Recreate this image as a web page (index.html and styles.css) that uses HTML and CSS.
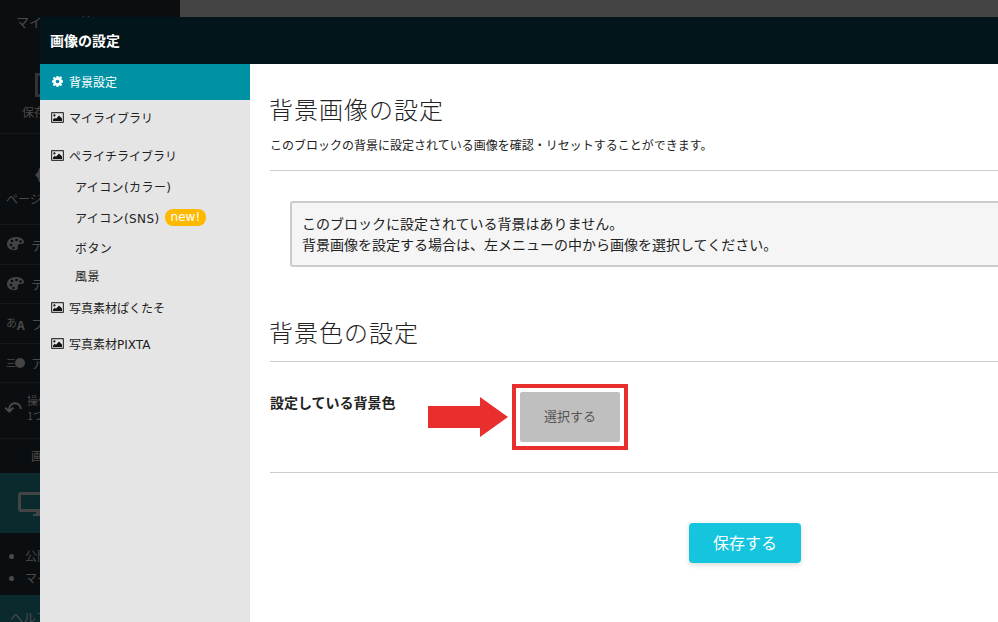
FILE: index.html
```html
<!DOCTYPE html>
<html lang="ja">
<head>
    <meta charset="UTF-8">
    <meta name="viewport" content="width=device-width, initial-scale=1.0">
    <title>画像の設定</title>
    <link rel="stylesheet" href="styles.css">
</head>
<body>

<svg class="svg-defs" width="0" height="0">
    <symbol id="icon-image" viewBox="0 0 13 11">
        <path fill="#3a3a3a" fill-rule="evenodd" d="M1 0h11a1 1 0 0 1 1 1v9a1 1 0 0 1-1 1H1a1 1 0 0 1-1-1V1a1 1 0 0 1 1-1zm.2 1.2v8.6h10.6V1.2z"/>
        <circle cx="3.400" cy="3.400" r="1.100" fill="#111"/>
        <path fill="#111" d="M2 9V7.400l1.800-1.600 1.200 1 3-3.200 3 3V9z"/>
    </symbol>
    <symbol id="icon-palette" viewBox="0 0 20 20">
        <path fill="#444" d="M10 3c4 0 8 2 8 5 0 3-5 1-6 3s1 4-2 5c-5 1-9-2-9-6s4-7 9-7z"/>
        <circle cx="6" cy="7" r="1.300" fill="#0a0e10"/>
        <circle cx="10.500" cy="6" r="1.300" fill="#0a0e10"/>
        <circle cx="14.500" cy="7.500" r="1.300" fill="#0a0e10"/>
        <circle cx="5" cy="11" r="1.300" fill="#0a0e10"/>
        <circle cx="7.500" cy="14" r="1.300" fill="#0a0e10"/>
    </symbol>
</svg>

<!-- Dimmed editor behind the modal -->
<aside class="editor-side">
    <div class="side-row side-title">マイページ管理</div>
    <div class="side-row side-save">
        <span class="save-icon"></span>
        <span>保存</span>
    </div>
    <div class="side-row side-page">
        <svg class="page-icon" viewBox="0 0 24 24"><path fill="#444" d="M12 3l3 2 4-1 1 4 3 3-3 3-1 4-4-1-3 2-3-2-4 1-1-4-3-3 3-3 1-4 4 1z"/></svg>
        <span>ページ</span>
    </div>
    <div class="side-row side-tool">
        <svg class="tool-icon"><use href="#icon-palette"/></svg>
        <span>テ</span>
    </div>
    <div class="side-row side-tool">
        <svg class="tool-icon"><use href="#icon-palette"/></svg>
        <span>テ</span>
    </div>
    <div class="side-row side-tool">
        <span class="font-icon">あ<b>A</b></span>
        <span>フ</span>
    </div>
    <div class="side-row side-tool">
        <span class="anim-icon">三<i></i></span>
        <span>ア</span>
    </div>
    <div class="side-row side-undo">
        <span class="undo-icon">↶</span>
        <span class="undo-text">操作<br>1つ</span>
    </div>
    <div class="side-row side-image">画</div>
    <div class="side-device">
        <svg class="device-icon" viewBox="0 0 44 24"><path fill="#444" d="M3 0h38a3 3 0 0 1 3 3v14a3 3 0 0 1-3 3H26v2h3v2H15v-2h3v-2H3a3 3 0 0 1-3-3V3a3 3 0 0 1 3-3zm0 3v14h38V3z"/></svg>
    </div>
    <ul class="side-list">
        <li>公開</li>
        <li>マイ</li>
    </ul>
    <div class="side-help">ヘルプ</div>
</aside>
<div class="editor-top"></div>

<!-- Modal -->
<div class="modal">
    <header class="modal-header">画像の設定</header>
    <div class="modal-body">
        <nav class="menu">
            <a class="menu-item active">
                <svg class="menu-icon" viewBox="0 0 12 12"><path fill="#fff" fill-rule="evenodd" d="M5 0h2l.3 1.600 1-.4 1.300-1 1.500 1.500-1 1.300.4 1L12 5v2l-1.500.3-.4 1 1 1.300-1.500 1.500-1.300-1-1 .4L7 12H5l-.3-1.500-1-.4-1.300 1L.9 9.600l1-1.300-.4-1L0 7V5l1.500-.3.4-1-1-1.300L2.400.9l1.300 1 1-.4zM6 4a2 2 0 1 0 0 4 2 2 0 0 0 0-4z"/></svg>
                背景設定
            </a>
            <a class="menu-item">
                <svg class="menu-icon"><use href="#icon-image"/></svg>
                マイライブラリ
            </a>
            <a class="menu-item menu-parent">
                <svg class="menu-icon"><use href="#icon-image"/></svg>
                ペライチライブラリ
            </a>
            <a class="menu-sub">アイコン(カラー)</a>
            <a class="menu-sub menu-sub-badge">アイコン(SNS)<span class="badge">new!</span></a>
            <a class="menu-sub">ボタン</a>
            <a class="menu-sub">風景</a>
            <a class="menu-item menu-after">
                <svg class="menu-icon"><use href="#icon-image"/></svg>
                写真素材ぱくたそ
            </a>
            <a class="menu-item">
                <svg class="menu-icon"><use href="#icon-image"/></svg>
                写真素材PIXTA
            </a>
        </nav>

        <main class="content">
            <h2 class="section-title">背景画像の設定</h2>
            <p class="section-lead">このブロックの背景に設定されている画像を確認・リセットすることができます。</p>
            <hr class="rule">
            <div class="notice">
                このブロックに設定されている背景はありません。<br>
                背景画像を設定する場合は、左メニューの中から画像を選択してください。
            </div>
            <h2 class="section-title second">背景色の設定</h2>
            <hr class="rule rule-tight">
            <div class="color-row">
                <div class="color-label">設定している背景色</div>
                <div class="select-frame">
                    <button class="select-btn">選択する</button>
                </div>
                <svg class="callout-arrow" viewBox="0 0 80 40"><path fill="#e92e2e" d="M0 9h52V0l28 20-28 20V31H0z"/></svg>
            </div>
            <hr class="rule">
            <div class="actions">
                <button class="save-btn">保存する</button>
            </div>
        </main>
    </div>
</div>

</body>
</html>
```

FILE: styles.css
```css
/* Basic Reset */
* {
    margin: 0;
    padding: 0;
    box-sizing: border-box;
}

html, body {
    height: 622px;
    overflow: hidden;
}

body {
    position: relative;
    display: flex;
    font-family: "Noto Sans CJK JP", "Noto Sans", sans-serif;
    background: #0a0e10;
    color: #222;
}

.svg-defs {
    position: absolute;
}

/* Dimmed editor */
.editor-side {
    flex: 0 0 180px;
    height: 622px;
    color: #4a4a4a;
    font-size: 12px;
    background: #0a0e10;
}

.editor-top {
    flex: 1;
    height: 17px;
    background: #444;
}

.side-row {
    border-bottom: 1px solid #15191b;
}

.side-title {
    height: 45px;
    padding: 14px 0 0 16px;
    font-size: 13px;
    line-height: 16px;
    border-bottom: 0;
}

.side-save {
    height: 89px;
    padding: 28px 0 0 22px;
    display: flex;
    flex-direction: column;
    gap: 6px;
}

.save-icon {
    width: 18px;
    height: 24px;
    margin-left: 13px;
    border: 3px solid #333;
}

.side-page {
    height: 91px;
    padding: 30px 0 0 6px;
    display: flex;
    flex-direction: column;
    gap: 2px;
}

.page-icon {
    width: 24px;
    height: 24px;
    margin-left: 28px;
}

.side-tool {
    height: 39.5px;
    padding-left: 6px;
    display: flex;
    align-items: center;
    gap: 5px;
    font-size: 13px;
}

.tool-icon {
    width: 20px;
    height: 20px;
}

.font-icon {
    width: 20px;
    font-size: 11px;
    line-height: 18px;
    white-space: nowrap;
}

.font-icon b {
    font-size: 12px;
    vertical-align: -3px;
}

.anim-icon {
    display: flex;
    align-items: center;
    width: 20px;
    font-size: 10px;
}

.anim-icon i {
    width: 10px;
    height: 10px;
    margin-left: -1px;
    border-radius: 50%;
    background: #444;
}

.side-undo {
    height: 56px;
    padding: 10px 0 0 4px;
    display: flex;
    gap: 5px;
}

.undo-icon {
    font-size: 22px;
    line-height: 28px;
}

.undo-text {
    line-height: 15px;
    font-size: 11px;
}

.side-image {
    height: 34px;
    padding: 8px 0 0 31px;
    border-bottom: 0;
}

.side-device {
    height: 60px;
    padding: 19px 0 0 18px;
    background: #0b2a2e;
}

.device-icon {
    width: 44px;
    height: 24px;
}

.side-list {
    height: 62px;
    padding: 12px 0 0 25px;
    line-height: 22px;
    font-size: 12px;
}

.side-help {
    height: 40px;
    padding: 12px 0 0 10px;
    font-size: 13px;
    background: #0b2a2e;
}

/* Modal */
.modal {
    position: absolute;
    top: 17px;
    left: 40px;
    width: 1200px;
    height: 605px;
    display: flex;
    flex-direction: column;
    background: #fff;
}

.modal-header {
    height: 47px;
    padding-left: 10px;
    font-size: 14px;
    font-weight: bold;
    line-height: 47px;
    color: #fff;
    background: #02151a;
}

.modal-body {
    flex: 1;
    display: flex;
}

/* Left menu */
.menu {
    flex: 0 0 210px;
    background: #e5e5e5;
    font-family: "DejaVu Sans", "Noto Sans CJK JP", sans-serif;
    font-size: 12px;
}

.menu-item {
    display: flex;
    align-items: center;
    gap: 5px;
    height: 36px;
    padding: 0 0 2px 11px;
    color: #222;
}

.menu-item.active {
    color: #fff;
    background: #0092a4;
}

.menu-icon {
    width: 13px;
    height: 11px;
}

.menu-parent {
    padding: 2px 0 0 11px;
}

.menu-sub {
    display: flex;
    align-items: center;
    height: 28px;
    padding-left: 35px;
    letter-spacing: 0.4px;
    color: #222;
}

.menu-sub-badge {
    height: 33px;
    padding-top: 2px;
}

.badge {
    margin-left: 5px;
    padding: 0 6px;
    font-size: 12px;
    line-height: 17px;
    letter-spacing: 0;
    color: #fff;
    background: #ffb900;
    border-radius: 8px;
}

.menu-after {
    margin-top: 1px;
}

/* Main content */
.content {
    flex: 1;
    padding: 0 20px;
}

.section-title {
    margin-top: 27px;
    font-size: 24px;
    font-weight: 300;
    line-height: 36px;
    letter-spacing: 1px;
    color: #222;
    text-indent: -1px;
}

.section-title.second {
    margin-top: 47px;
}

.section-lead {
    margin-top: 9px;
    margin-bottom: 16px;
    font-size: 12px;
    line-height: 18px;
}

.rule {
    border: 0;
    border-top: 1px solid #ccc;
}

.rule-tight {
    margin-top: 11px;
}

.notice {
    margin: 30px 0 0 20px;
    height: 66px;
    padding: 10px 10px;
    font-size: 14px;
    line-height: 21px;
    color: #222;
    background: #f5f5f5;
    border: 2px solid #ccc;
    border-radius: 3px;
}

.color-row {
    position: relative;
    display: flex;
    height: 110px;
    padding-top: 22px;
}

.color-label {
    flex: 0 0 242px;
    padding-top: 6px;
    font-size: 14px;
    font-weight: bold;
    line-height: 24px;
    color: #222;
}

.select-frame {
    width: 116px;
    height: 66px;
    padding: 4px;
    border: 4px solid #e92e2e;
}

.select-btn {
    display: block;
    width: 100px;
    height: 50px;
    padding-bottom: 4px;
    font-family: inherit;
    font-size: 13px;
    color: #555;
    background: #bfbfbf;
    border: 0;
    border-radius: 2px;
}

.callout-arrow {
    position: absolute;
    top: 35px;
    left: 158px;
    width: 80px;
    height: 40px;
}

.actions {
    display: flex;
    justify-content: center;
    margin-top: 50px;
}

.save-btn {
    width: 112px;
    height: 40px;
    padding-bottom: 2px;
    font-family: inherit;
    font-size: 16px;
    color: #fff;
    background: #15c5de;
    border: 0;
    border-radius: 4px;
    box-shadow: 0 2px 5px rgba(0, 0, 0, 0.15);
}
```
